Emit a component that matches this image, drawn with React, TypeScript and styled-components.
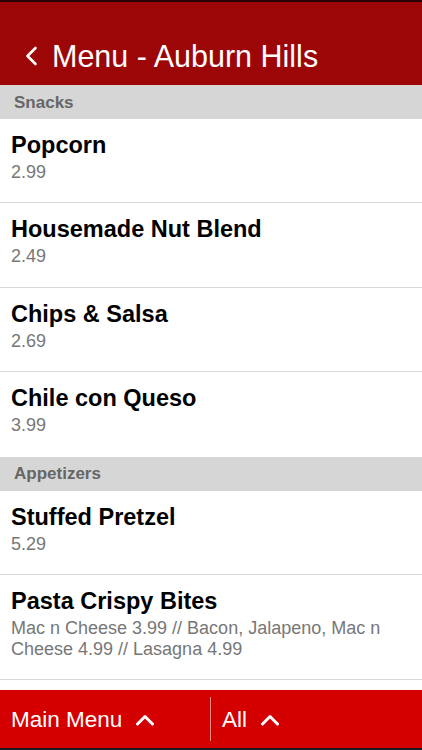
import styled, { createGlobalStyle } from 'styled-components'

const GlobalStyle = createGlobalStyle`
    html, body {
        margin: 0;
        padding: 0;
        background: #fff;
    }

    body {
        font-family: "Liberation Sans", Arial, sans-serif;
        -webkit-font-smoothing: antialiased;
    }
`

interface MenuItem {
    name: string
    detail: string
}

interface Section {
    title: string
    items: MenuItem[]
}

const sections: Section[] = [
    {
        title: 'Snacks',
        items: [
            { name: 'Popcorn', detail: '2.99' },
            { name: 'Housemade Nut Blend', detail: '2.49' },
            { name: 'Chips & Salsa', detail: '2.69' },
            { name: 'Chile con Queso', detail: '3.99' },
        ],
    },
    {
        title: 'Appetizers',
        items: [
            { name: 'Stuffed Pretzel', detail: '5.29' },
            {
                name: 'Pasta Crispy Bites',
                detail: 'Mac n Cheese 3.99 // Bacon, Jalapeno, Mac n Cheese 4.99 // Lasagna 4.99',
            },
        ],
    },
]

const Screen = styled.div`
    width: 422px;
    height: 750px;
    display: flex;
    flex-direction: column;
    overflow: hidden;
    border-top: 2px solid #2a0202;
    border-bottom: 2px solid #1a1a1a;
    box-sizing: border-box;
`

const Header = styled.header`
    height: 83px;
    flex-shrink: 0;
    background: #9d0606;
    display: flex;
    align-items: flex-end;
    padding: 0 0 11px 25px;
    box-sizing: border-box;
    color: #fff;
`

const TitleRow = styled.div`
    display: flex;
    align-items: center;
    gap: 14px;
    height: 36px;
`

const Title = styled.h1`
    margin: 0;
    font-size: 30.5px;
    font-weight: 400;
    line-height: 36px;
`

const List = styled.div`
    flex: 1;
    overflow: hidden;
`

const SectionHeader = styled.div`
    height: 34px;
    background: #d6d6d6;
    display: flex;
    align-items: center;
    padding: 1px 0 0 14px;
    box-sizing: border-box;
    font-size: 17px;
    font-weight: 700;
    color: #666;
`

const Row = styled.div<{ $last?: boolean }>`
    min-height: 84.4px;
    padding: 13px 22px 19px 11px;
    box-sizing: border-box;
    border-bottom: ${({ $last }) => ($last ? 'none' : '1px solid #d9d9d9')};
`

const ItemName = styled.div`
    font-size: 23.5px;
    font-weight: 700;
    color: #000;
    line-height: 27px;
`

const ItemDetail = styled.div`
    margin-top: 3px;
    font-size: 18px;
    color: #777;
    line-height: 21px;
`

const Footer = styled.footer`
    height: 58px;
    flex-shrink: 0;
    background: #d40000;
    display: flex;
    align-items: center;
    color: #fff;
    border-top: 9px solid #fff;
    box-sizing: content-box;
`

const FooterButton = styled.div<{ $width: number }>`
    width: ${({ $width }) => $width}px;
    display: flex;
    align-items: center;
    gap: 13px;
    padding: 2px 0 0 11px;
    box-sizing: border-box;
    font-size: 22.5px;
    line-height: 28px;
`

const FooterDivider = styled.div`
    width: 1px;
    height: 44px;
    background: #f08a8a;
`

const BackChevron = () => (
    <svg width="13" height="20" viewBox="0 0 13 20" fill="none">
        <path d="M10.5 2 L2.5 10 L10.5 18" stroke="#fff" strokeWidth="2.6" strokeLinecap="round" strokeLinejoin="round" />
    </svg>
)

const UpChevron = () => (
    <svg width="20" height="12" viewBox="0 0 20 12" fill="none">
        <path d="M2.5 10 L10 2.5 L17.5 10" stroke="#fff" strokeWidth="3" strokeLinecap="round" strokeLinejoin="round" />
    </svg>
)

export default function App() {
    return (
        <>
            <GlobalStyle />
            <Screen>
                <Header>
                    <TitleRow>
                        <BackChevron />
                        <Title>Menu - Auburn Hills</Title>
                    </TitleRow>
                </Header>
                <List>
                    {sections.map((section) => (
                        <div key={section.title}>
                            <SectionHeader>{section.title}</SectionHeader>
                            {section.items.map((item, i) => (
                                <Row key={item.name} $last={section.title === 'Snacks' && i === section.items.length - 1}>
                                    <ItemName>{item.name}</ItemName>
                                    <ItemDetail>{item.detail}</ItemDetail>
                                </Row>
                            ))}
                        </div>
                    ))}
                </List>
                <Footer>
                    <FooterButton $width={210}>
                        Main Menu
                        <UpChevron />
                    </FooterButton>
                    <FooterDivider />
                    <FooterButton $width={200}>
                        All
                        <UpChevron />
                    </FooterButton>
                </Footer>
            </Screen>
        </>
    )
}
